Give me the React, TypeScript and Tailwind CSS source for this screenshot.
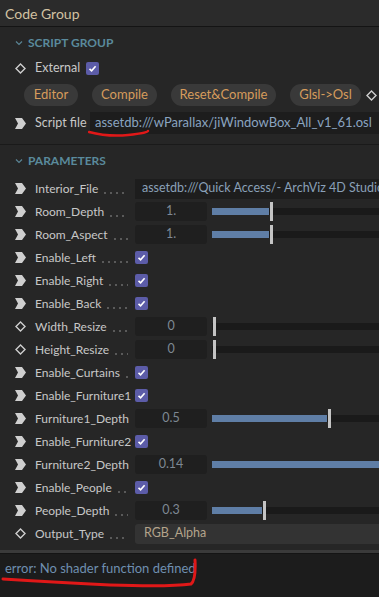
import React from 'react';

type Row =
  | { name: string; icon: 'arrow' | 'diamond'; kind: 'file'; value: string }
  | { name: string; icon: 'arrow' | 'diamond'; kind: 'check' }
  | { name: string; icon: 'arrow' | 'diamond'; kind: 'slider'; value: string; pct: number }
  | { name: string; icon: 'arrow' | 'diamond'; kind: 'select'; value: string };

const rows: Row[] = [
  { name: 'Interior_File', icon: 'arrow', kind: 'file', value: 'assetdb:///Quick Access/- ArchViz 4D Studio -' },
  { name: 'Room_Depth', icon: 'arrow', kind: 'slider', value: '1.', pct: 34 },
  { name: 'Room_Aspect', icon: 'arrow', kind: 'slider', value: '1.', pct: 34 },
  { name: 'Enable_Left', icon: 'arrow', kind: 'check' },
  { name: 'Enable_Right', icon: 'arrow', kind: 'check' },
  { name: 'Enable_Back', icon: 'arrow', kind: 'check' },
  { name: 'Width_Resize', icon: 'diamond', kind: 'slider', value: '0', pct: 0 },
  { name: 'Height_Resize', icon: 'diamond', kind: 'slider', value: '0', pct: 0 },
  { name: 'Enable_Curtains', icon: 'arrow', kind: 'check' },
  { name: 'Enable_Furniture1', icon: 'arrow', kind: 'check' },
  { name: 'Furniture1_Depth', icon: 'arrow', kind: 'slider', value: '0.5', pct: 69 },
  { name: 'Enable_Furniture2', icon: 'arrow', kind: 'check' },
  { name: 'Furniture2_Depth', icon: 'arrow', kind: 'slider', value: '0.14', pct: 100 },
  { name: 'Enable_People', icon: 'arrow', kind: 'check' },
  { name: 'People_Depth', icon: 'arrow', kind: 'slider', value: '0.3', pct: 30 },
  { name: 'Output_Type', icon: 'diamond', kind: 'select', value: 'RGB_Alpha' },
];

function ArrowIcon() {
  return (
    <svg width="11" height="11" viewBox="0 0 11 11" className="shrink-0">
      <polygon points="0,0 7,0 11,5.5 7,11 0,11 3,5.5" fill="#cfcfcf" />
    </svg>
  );
}

function DiamondIcon() {
  return (
    <svg width="11" height="11" viewBox="0 0 11 11" className="shrink-0">
      <polygon points="5.5,1 10,5.5 5.5,10 1,5.5" fill="none" stroke="#cfcfcf" strokeWidth="1.4" />
    </svg>
  );
}

function Check() {
  return (
    <span className="flex h-[13px] w-[13px] shrink-0 items-center justify-center rounded-[2px] bg-[#5c5ca8]">
      <svg width="9" height="9" viewBox="0 0 9 9">
        <path d="M1.5 4.8 L3.6 6.8 L7.6 2.2" fill="none" stroke="#ffffff" strokeWidth="1.6" />
      </svg>
    </span>
  );
}

function IconCell({ icon }: { icon: 'arrow' | 'diamond' }) {
  return (
    <div className="flex w-[35px] shrink-0 pl-[15px]">
      {icon === 'arrow' ? <ArrowIcon /> : <DiamondIcon />}
    </div>
  );
}

function Label({ name, icon }: { name: string; icon: 'arrow' | 'diamond' }) {
  return (
    <div className="flex w-[135px] shrink-0 items-center">
      <IconCell icon={icon} />
      <span className="shrink-0 whitespace-nowrap text-[12px] text-[#c8c8c8]">{name}</span>
      <div className="mr-[7px] ml-[4px] mt-[8px] h-[2px] flex-1 bg-[radial-gradient(circle,#5a5a5a_0.9px,transparent_1.1px)] bg-size-[6px_2px] bg-repeat-x" />
    </div>
  );
}

function SectionTitle({ title }: { title: string }) {
  return (
    <div className="flex h-[27px] items-center pl-[15px]">
      <svg width="8" height="6" viewBox="0 0 8 6" className="mr-[5px]">
        <path d="M1 1.5 L4 4.5 L7 1.5" fill="none" stroke="#5a8494" strokeWidth="1.2" />
      </svg>
      <span className="text-[12px] font-bold text-[#5a8a9c]">{title}</span>
    </div>
  );
}

function Control({ row }: { row: Row }) {
  if (row.kind === 'check') return <Check />;
  if (row.kind === 'file')
    return (
      <div className="flex h-[20px] min-w-0 flex-1 items-center overflow-hidden whitespace-nowrap bg-[#1d1d1d] pl-[7px] text-[#8aa0b8]">
        {row.value}
      </div>
    );
  if (row.kind === 'select')
    return (
      <div className="flex h-[20px] flex-1 items-center rounded-l-[3px] bg-[#333333] pl-[9px] text-[#b4a48c]">
        {row.value}
      </div>
    );
  return (
    <div className="flex flex-1 items-center">
      <div className="flex h-[19px] w-[72px] items-center justify-center rounded-[3px] bg-[#1f1f1f] text-[#7e8893]">
        {row.value}
      </div>
      <div className="relative ml-[5px] h-[7px] flex-1 bg-[#1a1a1a]">
        <div className="absolute inset-y-0 left-0 bg-[#5f7ea6]" style={{ width: `${row.pct}%` }} />
        {row.pct < 100 && (
          <div
            className="absolute top-[-6px] h-[19px] w-[3px] bg-[#c4c4c4]"
            style={{ left: `calc(${row.pct}% + 1px)` }}
          />
        )}
      </div>
    </div>
  );
}

export default function App() {
  return (
    <div
      className="flex h-[597px] w-[379px] flex-col overflow-hidden bg-[#262626] text-[12.5px]"
      style={{ fontFamily: 'Lato, "Liberation Sans", sans-serif' }}
    >
      <div className="flex h-[27px] shrink-0 items-center border-b border-[#141414] bg-[#2b2b2b] pl-[5px] text-[14px] text-[#d2c2a2]">
        Code Group
      </div>

      <div className="relative border-b border-[#1a1a1a] pb-[10px] pt-[2px]">
        <SectionTitle title="SCRIPT GROUP" />
        <div className="flex h-[25px] items-center">
          <IconCell icon="diamond" />
          <span className="mr-[6px] text-[#c8c8c8]">External</span>
          <Check />
        </div>
        <div className="flex h-[28px] items-center gap-[14px] whitespace-nowrap pl-[24px] text-[13px]">
          <button className="h-[22px] w-[54px] shrink-0 rounded-full bg-[#393939] text-[#d69c5c]">Editor</button>
          <button className="h-[22px] w-[65px] shrink-0 rounded-full bg-[#393939] text-[#d69c5c]">Compile</button>
          <button className="h-[22px] w-[105px] shrink-0 rounded-full bg-[#393939] text-[#d69c5c]">Reset&amp;Compile</button>
          <button className="h-[22px] w-[71px] shrink-0 rounded-full bg-[#393939] text-[#d69c5c]">Glsl-&gt;Osl</button>
          <div className="-ml-[9px] shrink-0">
            <DiamondIcon />
          </div>
        </div>
        <div className="mt-[3px] flex h-[22px] items-center">
          <IconCell icon="arrow" />
          <span className="w-[55px] shrink-0 whitespace-nowrap text-[#c8c8c8]">Script file</span>
          <div className="flex h-[22px] min-w-0 flex-1 items-center overflow-hidden whitespace-nowrap bg-[#1d1d1d] pl-[5px] text-[13px] text-[#8aa4c0]">
            assetdb:///wParallax/jiWindowBox_All_v1_61.osl
          </div>
        </div>
        <svg className="absolute left-[88px] top-[102px]" width="62" height="10" viewBox="0 0 62 10">
          <path d="M1 3 Q 20 8 40 6 T 60 2" fill="none" stroke="#e01818" strokeWidth="2.5" strokeLinecap="round" />
        </svg>
      </div>

      <div className="flex-1 border-b-[3px] border-[#3a3a3a] pt-[2px]">
        <SectionTitle title="PARAMETERS" />
        <div className="flex flex-col pt-[3px]">
          {rows.map((row) => (
            <div key={row.name} className="flex h-[23px] items-center">
              <Label name={row.name} icon={row.icon} />
              <Control row={row} />
            </div>
          ))}
        </div>
      </div>

      <div className="relative h-[44px] shrink-0 border-t border-[#141414] bg-[#1c1c1c] pl-[5px] pt-[5px] text-[13px] text-[#6f8fb0]">
        error: No shader function defined
        <svg className="absolute left-0 top-[2px]" width="200" height="32" viewBox="0 0 200 32">
          <path
            d="M3 23 Q 50 26 110 29 Q 170 31 191 28 Q 196 24 195 4"
            fill="none"
            stroke="#e01818"
            strokeWidth="3"
            strokeLinecap="round"
          />
        </svg>
      </div>
    </div>
  );
}
